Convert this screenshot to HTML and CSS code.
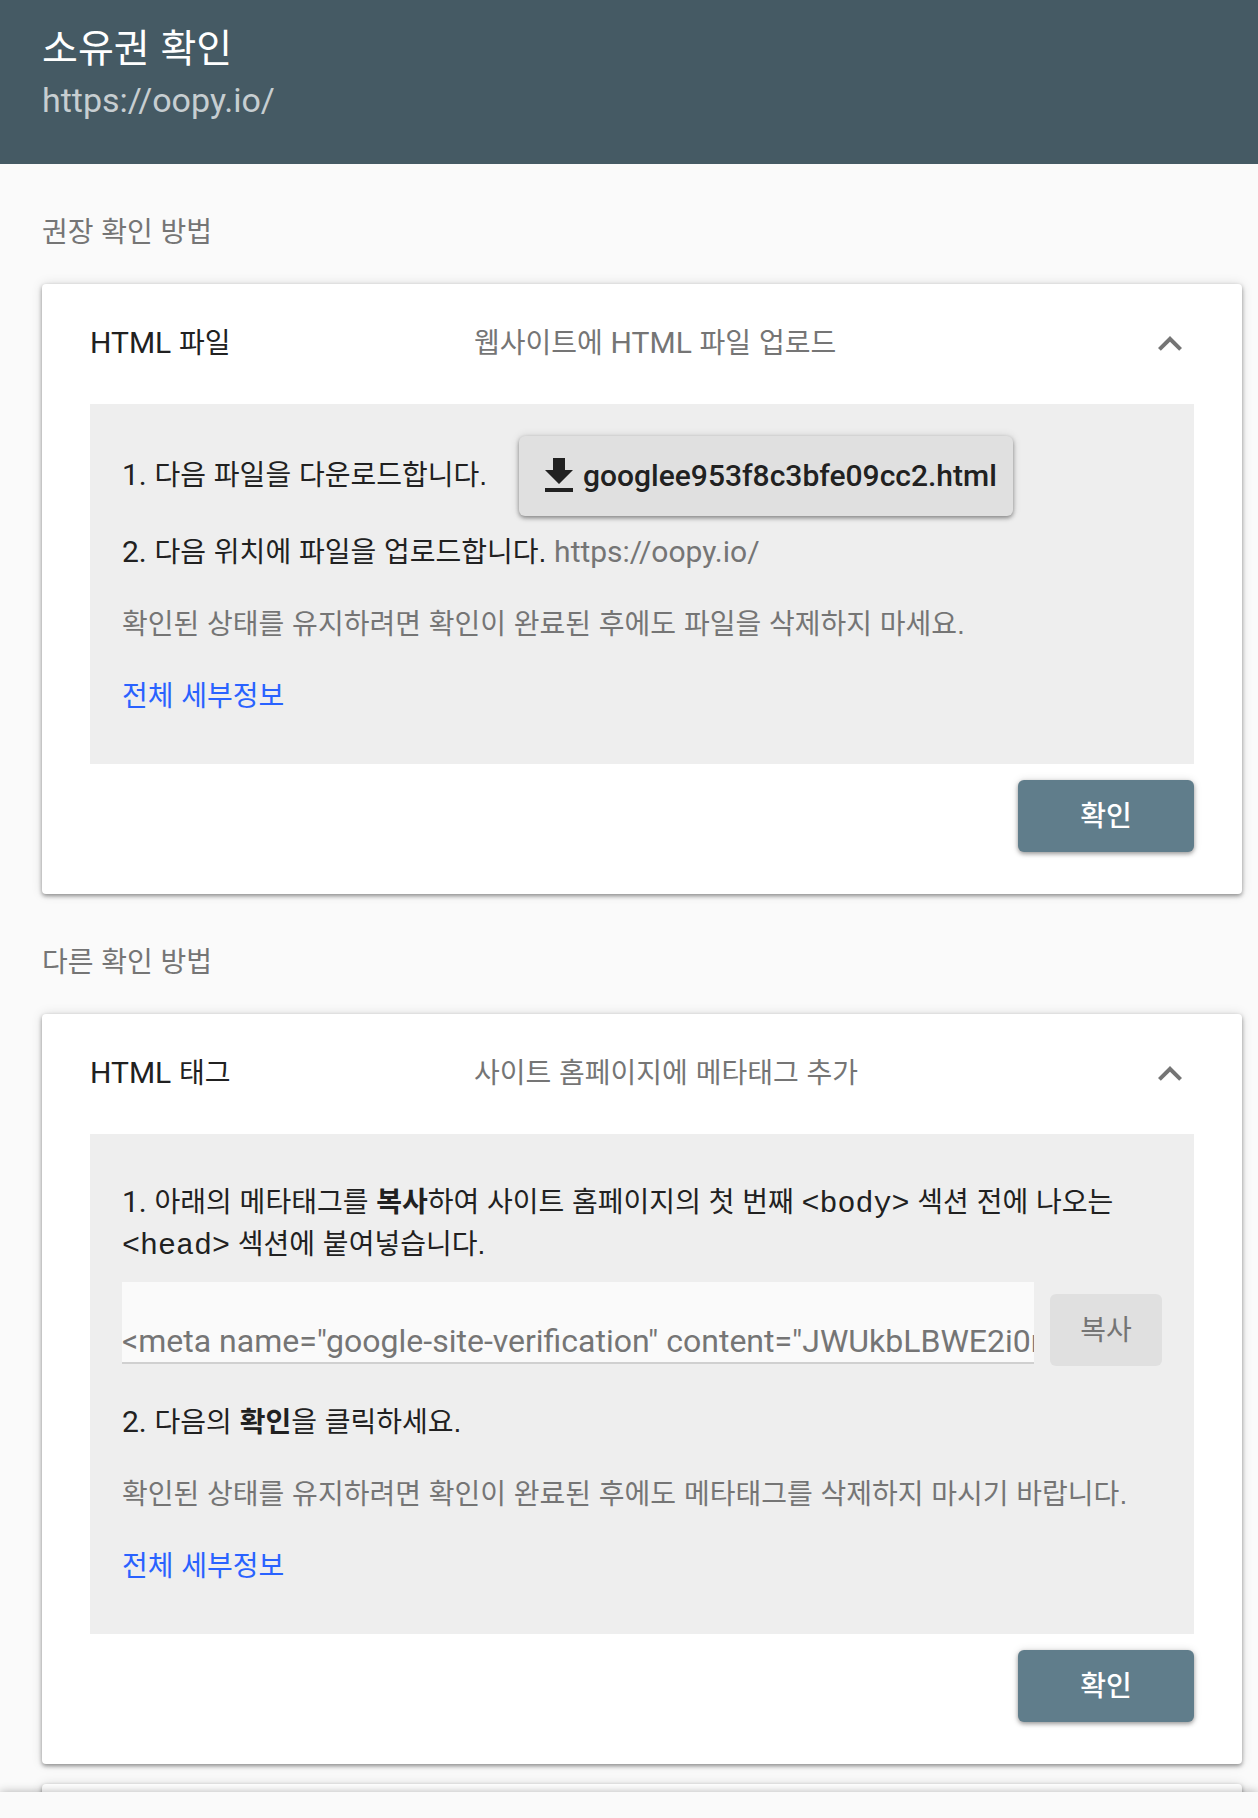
FILE: index.html
```
<!DOCTYPE html>
<html lang="ko">
<head>
  <meta charset="UTF-8">
  <title>소유권 확인</title>
  <link rel="stylesheet" href="styles.css">
</head>
<body>
  <header class="dialog-header">
    <h1>소유권 확인</h1>
    <div class="site-url">https://oopy.io/</div>
  </header>

  <main class="methods">
    <h2 class="section-title">권장 확인 방법</h2>
    <section class="card">
      <div class="card-header">
        <h3 class="card-title"><span class="en">HTML</span> 파일</h3>
        <span class="card-desc">웹사이트에 <span class="en">HTML</span> 파일 업로드</span>
        <button class="toggle" type="button" aria-label="접기" aria-expanded="true">
          <svg viewBox="0 0 24 24" width="48" height="48"><path d="M12 8l-6 6 1.41 1.41L12 10.83l4.59 4.58L18 14z"/></svg>
        </button>
      </div>
      <div class="panel panel-file">
        <div class="download-row">
          <span><span class="en">1.</span> 다음 파일을 다운로드합니다.</span>
          <button class="download-btn" type="button">
            <svg viewBox="0 0 28 34" width="28" height="34"><path d="M8 0h12v12h8L14 26 0 12h8zM0 30h28v4H0z"/></svg>
            googlee953f8c3bfe09cc2.html
          </button>
        </div>
        <p><span class="en">2.</span> 다음 위치에 파일을 업로드합니다. <span class="en muted">https://oopy.io/</span></p>
        <p class="muted">확인된 상태를 유지하려면 확인이 완료된 후에도 파일을 삭제하지 마세요.</p>
        <p><a href="#">전체 세부정보</a></p>
      </div>
      <div class="card-actions">
        <button class="verify-btn" type="button">확인</button>
      </div>
    </section>

    <h2 class="section-title">다른 확인 방법</h2>
    <section class="card">
      <div class="card-header">
        <h3 class="card-title"><span class="en">HTML</span> 태그</h3>
        <span class="card-desc">사이트 홈페이지에 메타태그 추가</span>
        <button class="toggle" type="button" aria-label="접기" aria-expanded="true">
          <svg viewBox="0 0 24 24" width="48" height="48"><path d="M12 8l-6 6 1.41 1.41L12 10.83l4.59 4.58L18 14z"/></svg>
        </button>
      </div>
      <div class="panel panel-tag">
        <p><label for="meta-tag"><span class="en">1.</span> 아래의 메타태그를 <b>복사</b>하여 사이트 홈페이지의 첫 번째 <code>&lt;body&gt;</code> 섹션 전에 나오는 <code>&lt;head&gt;</code> 섹션에 붙여넣습니다.</label></p>
        <div class="copy-row">
          <input id="meta-tag" class="meta-input" type="text" readonly value="&lt;meta name=&quot;google-site-verification&quot; content=&quot;JWUkbLBWE2i0n">
          <button class="copy-btn" type="button">복사</button>
        </div>
        <p><span class="en">2.</span> 다음의 <b>확인</b>을 클릭하세요.</p>
        <p class="muted">확인된 상태를 유지하려면 확인이 완료된 후에도 메타태그를 삭제하지 마시기 바랍니다.</p>
        <p><a href="#">전체 세부정보</a></p>
      </div>
      <div class="card-actions">
        <button class="verify-btn" type="button">확인</button>
      </div>
    </section>

    <section class="card card-collapsed"></section>
  </main>

  <footer class="dialog-footer"></footer>
</body>
</html>
```

FILE: styles.css
```
* {
  box-sizing: border-box;
}
body {
  margin: 0;
  height: 100vh;
  display: flex;
  flex-direction: column;
  background: #fafafa;
  color: #212121;
  font-family: "Liberation Sans", "Noto Sans CJK KR", sans-serif;
  font-size: 28px;
  line-height: 42px;
}
h1, h2, h3, p {
  margin: 0;
  font-weight: 400;
}
button, input {
  font-family: inherit;
}
button {
  border: none;
  cursor: pointer;
}
/* Latin text is Roboto and runs a little larger than Hangul */
.en,
.site-url,
.download-btn,
.meta-input {
  font-family: Roboto, sans-serif;
}
.en {
  font-size: 30px;
  line-height: 1;
}
.muted {
  color: #757575;
}
.dialog-header {
  flex: none;
  background: #455a64;
  padding: 24px 42px 38px;
}
.dialog-header h1 {
  color: #fff;
  font-size: 39px;
  line-height: 50px;
}
.site-url {
  color: #c7ced1;
  font-size: 34px;
  line-height: 52px;
}
.methods {
  flex: 1;
  min-height: 0;
  overflow-y: auto;
  scrollbar-width: none;
  padding: 0 16px 0 42px;
}
.section-title {
  font-size: 28px;
  line-height: 42px;
  padding: 48px 0 30px;
  color: #757575;
}
.card {
  background: #fff;
  border-radius: 4px;
  padding: 0 48px 42px;
  box-shadow: 0 2px 4px rgba(0, 0, 0, 0.4), 0 0 12px rgba(0, 0, 0, 0.12);
}
.card-header {
  display: flex;
  align-items: center;
  height: 120px;
}
.card-title {
  width: 384px;
  font-size: 28px;
}
.card-desc {
  flex: 1;
  color: #757575;
}
.toggle {
  padding: 0;
  width: 48px;
  height: 48px;
  background: none;
}
.toggle svg {
  display: block;
  fill: #757575;
}
.panel {
  background: #eee;
  padding: 32px 32px 46px;
}
.panel-tag {
  padding-top: 48px;
}
.panel p + p {
  margin-top: 30px;
}
.panel a {
  color: #2962ff;
  text-decoration: none;
}
.download-row {
  display: flex;
  align-items: center;
  gap: 32px;
  margin-bottom: 16px;
}
.download-btn {
  display: flex;
  align-items: center;
  gap: 10px;
  height: 80px;
  padding: 0 16px 2px 26px;
  border-radius: 6px;
  background: #e0e0e0;
  color: #212121;
  font-size: 30px;
  font-weight: 500;
  box-shadow: 0 2px 4px rgba(0, 0, 0, 0.4), 0 0 10px rgba(0, 0, 0, 0.12);
}
.download-btn svg {
  fill: #212121;
}
code {
  font-family: "Liberation Mono", monospace;
  font-size: 30px;
  line-height: 1;
}
.copy-row {
  display: flex;
  align-items: flex-end;
  gap: 16px;
  margin: 16px 0 36px;
}
.meta-input {
  flex: 1;
  min-width: 0;
  height: 82px;
  margin-bottom: 2px;
  padding: 40px 0 2px;
  border: none;
  border-bottom: 2px solid #d0d0d0;
  background: #fafafa;
  color: #757575;
  font-size: 32px;
}
.copy-btn {
  width: 112px;
  height: 72px;
  padding: 0 0 4px;
  border-radius: 6px;
  background: #e0e0e0;
  color: #757575;
  font-size: 28px;
}
.card-actions {
  display: flex;
  justify-content: flex-end;
  padding-top: 16px;
}
.verify-btn {
  width: 176px;
  height: 72px;
  padding: 0 0 4px;
  border-radius: 6px;
  background: #607d8b;
  color: #fff;
  font-size: 28px;
  font-weight: 500;
  box-shadow: 0 2px 4px rgba(0, 0, 0, 0.35), 0 0 8px rgba(0, 0, 0, 0.12);
}
.card-collapsed {
  height: 120px;
  margin-top: 20px;
}
.dialog-footer {
  position: relative;
  flex: none;
  height: 26px;
  background: #fafafa;
  box-shadow: 0 0 10px rgba(0, 0, 0, 0.3);
}
```
